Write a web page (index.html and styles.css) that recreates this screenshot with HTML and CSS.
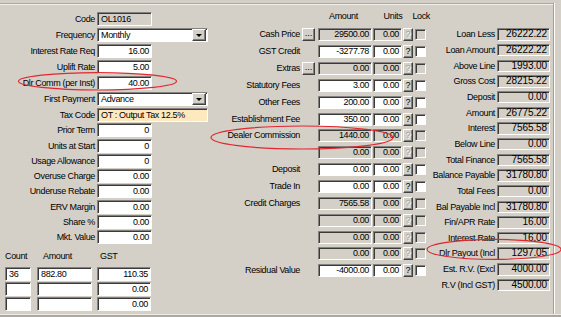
FILE: index.html
```html
<!DOCTYPE html>
<html lang="en">
<head>
    <meta charset="UTF-8">
    <title>Lease Quote</title>
    <link rel="stylesheet" href="styles.css">
</head>
<body>
    <div class="frame">
        <!-- left: contract details -->
        <div class="col-left">
            <div class="lgrid">
                <div class="lrow"><label>Code</label><span class="box ro w55 txt">OL1016</span></div>
                <div class="lrow"><label>Frequency</label><span class="box sel"><span class="sel-text">Monthly</span><span class="drop"><i></i></span></span></div>
                <div class="lrow"><label>Interest Rate Req</label><span class="box w55">16.00</span></div>
                <div class="lrow"><label>Uplift Rate</label><span class="box w55">5.00</span></div>
                <div class="lrow"><label>Dlr Comm (per Inst)</label><span class="box w55">40.00</span></div>
                <div class="lrow"><label>First Payment</label><span class="box sel"><span class="sel-text">Advance</span><span class="drop"><i></i></span></span></div>
                <div class="lrow"><label>Tax Code</label><span class="box tax">OT : Output Tax 12.5%</span></div>
                <div class="lrow"><label>Prior Term</label><span class="box w55">0</span></div>
                <div class="lrow"><label>Units at Start</label><span class="box w55">0</span></div>
                <div class="lrow"><label>Usage Allowance</label><span class="box w55">0</span></div>
                <div class="lrow"><label>Overuse Charge</label><span class="box w55">0.00</span></div>
                <div class="lrow"><label>Underuse Rebate</label><span class="box w55">0.00</span></div>
                <div class="lrow"><label>ERV Margin</label><span class="box w55">0.00</span></div>
                <div class="lrow"><label>Share %</label><span class="box w55">0.00</span></div>
                <div class="lrow"><label>Mkt. Value</label><span class="box w55">0.00</span></div>
            </div>

            <div class="instal">
                <div class="ihead"><span class="h-count">Count</span><span class="h-amount">Amount</span><span>GST</span></div>
                <div class="irow"><span class="box txt c-count">36</span><span class="box txt c-amount">882.80</span><span class="box c-gst">110.35</span></div>
                <div class="irow"><span class="box txt c-count"></span><span class="box txt c-amount"></span><span class="box c-gst">0.00</span></div>
                <div class="irow"><span class="box txt c-count"></span><span class="box txt c-amount"></span><span class="box c-gst">0.00</span></div>
            </div>
        </div>

        <!-- middle: price components -->
        <div class="col-mid">
            <div class="mhead"><span class="mh-amount">Amount</span><span class="mh-units">Units</span><span>Lock</span></div>
            <div class="mrow"><label>Cash Price</label><span class="btn dots">...</span><span class="box ro amt">29500.00</span><span class="box ro units">0.00</span><span class="btn q off">?</span><span class="chk off"></span></div>
            <div class="mrow"><label>GST Credit</label><span class="nodots"></span><span class="box amt">-3277.78</span><span class="box units">0.00</span><span class="btn q">?</span><span class="chk"></span></div>
            <div class="mrow"><label>Extras</label><span class="btn dots">...</span><span class="box ro amt">0.00</span><span class="box ro units">0.00</span><span class="btn q off">?</span><span class="chk off"></span></div>
            <div class="mrow"><label>Statutory Fees</label><span class="nodots"></span><span class="box amt">3.00</span><span class="box units">0.00</span><span class="btn q">?</span><span class="chk"></span></div>
            <div class="mrow"><label>Other Fees</label><span class="nodots"></span><span class="box amt">200.00</span><span class="box units">0.00</span><span class="btn q">?</span><span class="chk"></span></div>
            <div class="mrow"><label>Establishment Fee</label><span class="nodots"></span><span class="box amt">350.00</span><span class="box units">0.00</span><span class="btn q">?</span><span class="chk"></span></div>
            <div class="mrow"><label>Dealer Commission</label><span class="nodots"></span><span class="box ro amt">1440.00</span><span class="box ro units">0.00</span><span class="btn q off">?</span><span class="chk off"></span></div>
            <div class="mrow"><label></label><span class="nodots"></span><span class="box ro amt">0.00</span><span class="box ro units">0.00</span><span class="btn q off">?</span><span class="chk off"></span></div>
            <div class="mrow"><label>Deposit</label><span class="nodots"></span><span class="box amt">0.00</span><span class="box units">0.00</span><span class="btn q">?</span><span class="chk"></span></div>
            <div class="mrow"><label>Trade In</label><span class="nodots"></span><span class="box amt">0.00</span><span class="box units">0.00</span><span class="btn q">?</span><span class="chk"></span></div>
            <div class="mrow"><label>Credit Charges</label><span class="nodots"></span><span class="box ro amt">7565.58</span><span class="box ro units">0.00</span><span class="btn q off">?</span><span class="chk off"></span></div>
            <div class="mrow"><label></label><span class="nodots"></span><span class="box ro amt">0.00</span><span class="box ro units">0.00</span><span class="btn q off">?</span><span class="chk off"></span></div>
            <div class="mrow"><label></label><span class="nodots"></span><span class="box ro amt">0.00</span><span class="box ro units">0.00</span><span class="btn q off">?</span><span class="chk off"></span></div>
            <div class="mrow"><label></label><span class="nodots"></span><span class="box ro amt">0.00</span><span class="box ro units">0.00</span><span class="btn q off">?</span><span class="chk off"></span></div>
            <div class="mrow"><label>Residual Value</label><span class="nodots"></span><span class="box amt">-4000.00</span><span class="box units">0.00</span><span class="btn q">?</span><span class="chk"></span></div>
        </div>

        <!-- right: totals -->
        <div class="col-right">
            <div class="rrow"><label>Loan Less</label><span class="box ro rval">26222.22</span></div>
            <div class="rrow"><label>Loan Amount</label><span class="box ro rval">26222.22</span></div>
            <div class="rrow"><label>Above Line</label><span class="box ro rval">1993.00</span></div>
            <div class="rrow"><label>Gross Cost</label><span class="box ro rval">28215.22</span></div>
            <div class="rrow"><label>Deposit</label><span class="box ro rval">0.00</span></div>
            <div class="rrow"><label>Amount</label><span class="box ro rval">26775.22</span></div>
            <div class="rrow"><label>Interest</label><span class="box ro rval">7565.58</span></div>
            <div class="rrow"><label>Below Line</label><span class="box ro rval">0.00</span></div>
            <div class="rrow"><label>Total Finance</label><span class="box ro rval">7565.58</span></div>
            <div class="rrow"><label>Balance Payable</label><span class="box ro rval">31780.80</span></div>
            <div class="rrow"><label>Total Fees</label><span class="box ro rval">0.00</span></div>
            <div class="rrow"><label>Bal Payable Incl</label><span class="box ro rval">31780.80</span></div>
            <div class="rrow"><label>Fin/APR Rate</label><span class="box ro rval">16.00</span></div>
            <div class="rrow"><label>Interest Rate</label><span class="box ro rval">16.00</span></div>
            <div class="rrow"><label>Dlr Payout (Incl</label><span class="box ro rval">1297.05</span></div>
            <div class="rrow"><label>Est. R.V. (Excl</label><span class="box ro rval">4000.00</span></div>
            <div class="rrow"><label>R.V (Incl GST)</label><span class="box ro rval">4500.00</span></div>
        </div>
    </div>
    <div class="statusbar"></div>

    <!-- red markup circles drawn over the form -->
    <svg class="marks" width="561" height="317" viewBox="0 0 561 317">
        <ellipse cx="97.5" cy="81.3" rx="79" ry="8.7"/>
        <ellipse cx="302" cy="137.5" rx="91" ry="11.5"/>
        <ellipse cx="494" cy="249.4" rx="67" ry="10"/>
    </svg>
</body>
</html>
```

FILE: styles.css
```css
* {
    box-sizing: border-box;
}
body {
    margin: 0;
    width: 561px;
    height: 317px;
    overflow: hidden;
    position: relative;
    background: #d4d0c8;
    font-family: "Liberation Sans", Arial, sans-serif;
    font-size: 9px;
    letter-spacing: -0.35px;
    color: #000;
}
.frame {
    margin-top: 3px;
    width: 554px;
    height: 311px;
    border-top: 1px solid #aaa7a1;
    border-right: 1px solid #a29f99;
    box-shadow: inset 0 1px 0 #f2f1ee, 1px 0 0 #fff;
    display: flex;
}
.statusbar {
    height: 3px;
    border-top: 1px solid #ecebe7;
    background: #aba8a2;
}

/* sunken edit box */
.box {
    display: block;
    height: 14px;
    border: 1px solid;
    border-color: #848280 #fff #fff #848280;
    box-shadow: inset 1px 1px 0 #3a3a3a;
    background: #fff;
    line-height: 12px;
    padding: 0 2px 0 3px;
    text-align: right;
    white-space: nowrap;
    overflow: hidden;
}
.box.ro {
    background: #d4d0c8;
}
.box.txt {
    text-align: left;
}
.w55 {
    width: 55px;
}

/* raised button */
.btn {
    display: block;
    border: 1px solid;
    border-color: #fff #404040 #404040 #fff;
    box-shadow: inset -1px -1px 0 #808080;
    background: #d4d0c8;
    text-align: center;
    letter-spacing: 0;
}

/* left column */
.col-left {
    width: 210px;
    padding-top: 8px;
}
.lgrid {
    display: grid;
    grid-template-rows: repeat(6, 16px) repeat(9, 15.25px);
}
.lrow {
    display: flex;
    align-items: flex-start;
}
.lrow label {
    width: 97px;
    padding-right: 2px;
    text-align: right;
    line-height: 14px;
    white-space: nowrap;
}
.sel {
    width: 111px;
    display: flex;
    padding: 0 0 0 3px;
    text-align: left;
}
.sel-text {
    flex: 1;
}
.drop {
    width: 14px;
    height: 12px;
    margin-right: 1px;
    border: 1px solid;
    border-color: #fff #404040 #404040 #fff;
    box-shadow: inset -1px -1px 0 #808080;
    background: #d4d0c8;
    display: flex;
    align-items: center;
    justify-content: center;
}
.drop i {
    width: 0;
    height: 0;
    border-left: 3px solid transparent;
    border-right: 3px solid transparent;
    border-top: 3px solid #000;
}
.tax {
    width: 111px;
    background: #fde8c0;
    text-align: left;
}

.instal {
    margin-top: 5px;
}
.ihead {
    display: flex;
    line-height: 12px;
    height: 17px;
}
.h-count {
    width: 43px;
    padding-left: 5px;
}
.h-amount {
    width: 57px;
}
.irow {
    display: flex;
    height: 15px;
}
.c-count {
    margin-left: 5px;
    width: 26px;
}
.c-amount {
    margin-left: 6px;
    width: 55px;
}
.c-gst {
    margin-left: 5px;
    width: 54px;
}

/* middle column */
.col-mid {
    width: 220px;
    padding-top: 7px;
}
.mhead {
    display: flex;
    height: 17.3px;
    line-height: 11px;
    padding-left: 119px;
}
.mh-amount {
    width: 55px;
}
.mh-units {
    width: 29px;
}
.mrow {
    display: flex;
    align-items: flex-start;
    height: 16.86px;
}
.mrow label {
    width: 92px;
    padding-right: 2px;
    text-align: right;
    line-height: 13px;
    white-space: nowrap;
}
.mrow .box {
    height: 13px;
    line-height: 11px;
}
.dots {
    width: 13px;
    height: 13px;
    line-height: 9px;
    font-size: 9px;
}
.nodots {
    width: 13px;
}
.amt {
    margin-left: 3px;
    width: 54px;
}
.units {
    margin-left: 1px;
    width: 29px;
}
.q {
    margin-left: 1px;
    width: 10px;
    height: 13px;
    line-height: 11px;
}
.q.off {
    color: #a3a09a;
    text-shadow: 1px 1px 0 #fff;
}
.chk {
    margin: 1px 0 0 2px;
    width: 11px;
    height: 11px;
    border: 1px solid;
    border-color: #848280 #fff #fff #848280;
    box-shadow: inset 1px 1px 0 #3a3a3a;
    background: #fff;
}
.chk.off {
    background: #d4d0c8;
}

/* right column */
.col-right {
    width: 123px;
    padding-top: 24.3px;
}
.rrow {
    display: flex;
    align-items: flex-start;
    height: 15.67px;
}
.rrow label {
    width: 67px;
    padding-right: 2px;
    text-align: right;
    line-height: 12.5px;
    white-space: nowrap;
}
.rval {
    width: 53px;
    height: 12.5px;
    line-height: 10.5px;
    font-size: 10px;
    letter-spacing: -0.1px;
}

.marks {
    position: absolute;
    left: 0;
    top: 0;
    pointer-events: none;
}
.marks ellipse {
    fill: none;
    stroke: #e3262e;
    stroke-width: 1.2;
}
```
